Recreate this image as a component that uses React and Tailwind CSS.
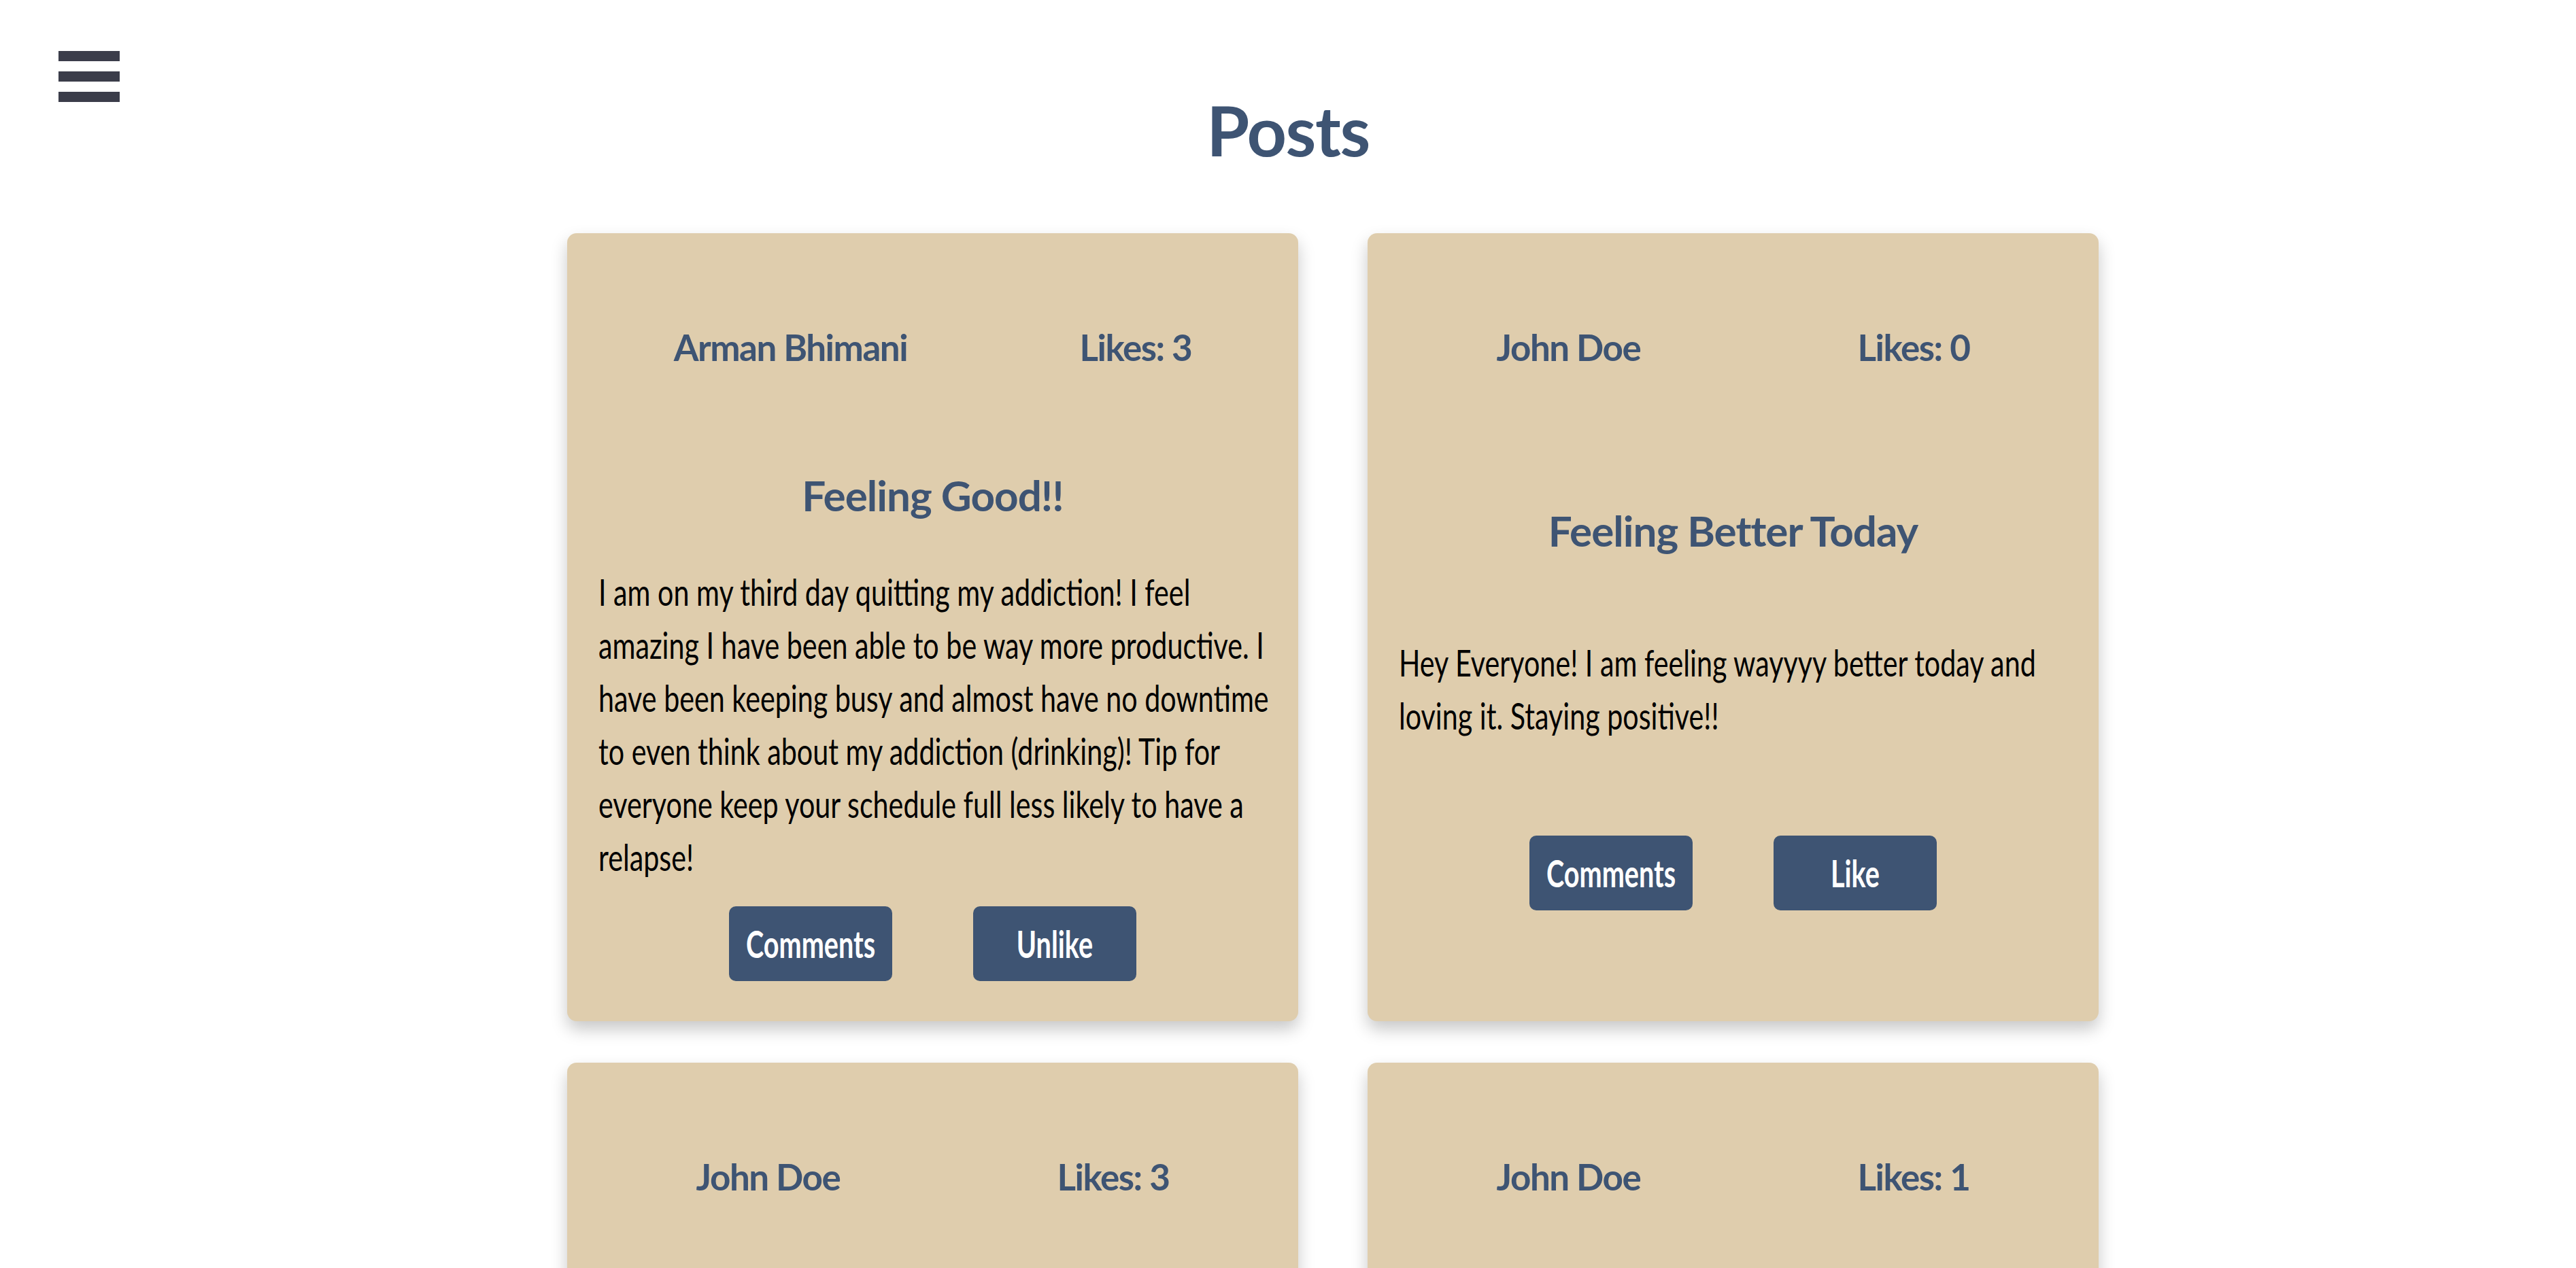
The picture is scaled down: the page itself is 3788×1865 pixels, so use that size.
import React from "react";

function Card({ name, likes, title, lines, action }) {
  return (
    <div className="flex min-h-[600px] flex-col rounded-[14px] bg-[#dfcdad] p-[30px] shadow-[0_12px_24px_rgba(0,0,0,0.22)]">
      <div className="mt-[105px] flex justify-around font-['Lato',sans-serif] text-[53px] font-bold leading-[66px] tracking-[-1.5px] text-[#3e5473]">
        <span>{name}</span>
        <span>Likes: {likes}</span>
      </div>
      {title && (
        <div className="flex flex-1 flex-col justify-evenly">
          <h2 className="mt-[146px] text-center font-['Lato',sans-serif] text-[62px] font-bold leading-[77px] tracking-[-1px] text-[#3e5473]">
            {title}
          </h2>
          <p className="ml-[16px] mr-[10px] mt-[64px] origin-left scale-x-[0.75] whitespace-nowrap font-['Lato',sans-serif] text-[55px] leading-[78px] text-black">
            {lines.map((l, i) => (
              <React.Fragment key={i}>
                {i > 0 && <br />}
                {l}
              </React.Fragment>
            ))}
          </p>
          <div className="h-0" />
          <div className="mt-[34px] flex justify-center gap-[119px]">
            <button className="flex h-[110px] w-[240px] items-center justify-center rounded-[10px] bg-[#3e5473] font-['Lato',sans-serif] text-[55px] font-bold text-white">
              <span className="inline-block scale-x-[0.72]">Comments</span>
            </button>
            <button className="flex h-[110px] w-[240px] items-center justify-center rounded-[10px] bg-[#3e5473] font-['Lato',sans-serif] text-[55px] font-bold text-white">
              <span className="inline-block scale-x-[0.72]">{action}</span>
            </button>
          </div>
          <div className="h-[29px]" />
        </div>
      )}
    </div>
  );
}

export default function App() {
  return (
    <div className="min-h-screen bg-white pb-[200px]">
      <div className="grid grid-cols-[1fr_auto_1fr] items-start">
        <div className="pl-[86px] pt-[75px]">
          <button className="flex w-[90px] flex-col gap-[15px]" aria-label="menu">
            <span className="block h-[15px] w-[90px] bg-[#3b3d4a]" />
            <span className="block h-[15px] w-[90px] bg-[#3b3d4a]" />
            <span className="block h-[15px] w-[90px] bg-[#3b3d4a]" />
          </button>
        </div>
        <h1 className="pt-[130px] text-center font-['Lato',sans-serif] text-[102px] font-bold leading-[122px] tracking-[-1.5px] text-[#3e5473]">
          Posts
        </h1>
        <div />
      </div>
      <div className="mt-[91px] flex justify-center pl-[132px]">
        <div className="grid grid-cols-[1075px_1075px] gap-x-[102px] gap-y-[61px]">
          <Card
            name="Arman Bhimani"
            likes={3}
            title="Feeling Good!!"
            lines={[
              "I am on my third day quitting my addiction! I feel",
              "amazing I have been able to be way more productive. I",
              "have been keeping busy and almost have no downtime",
              "to even think about my addiction (drinking)! Tip for",
              "everyone keep your schedule full less likely to have a",
              "relapse!",
            ]}
            action="Unlike"
          />
          <Card
            name="John Doe"
            likes={0}
            title="Feeling Better Today"
            lines={[
              "Hey Everyone! I am feeling wayyyy better today and",
              "loving it. Staying positive!!",
            ]}
            action="Like"
          />
          <Card name="John Doe" likes={3} />
          <Card name="John Doe" likes={1} />
        </div>
      </div>
    </div>
  );
}
